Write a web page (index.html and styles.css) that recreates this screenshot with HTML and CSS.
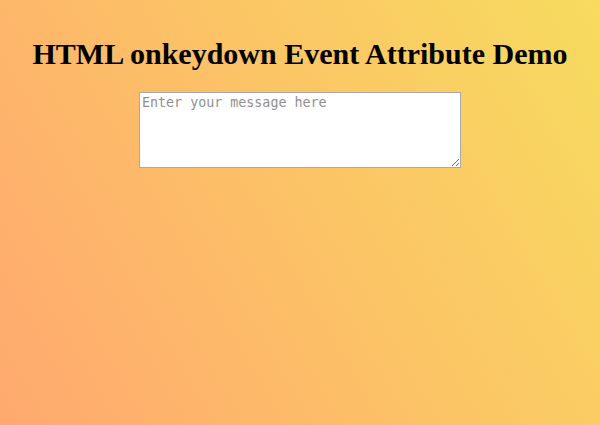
FILE: index.html
```html
<!DOCTYPE html>
<html>
<head>
<meta charset="utf-8">
<link rel="stylesheet" href="styles.css">
</head>
<body>
<main class="page">
  <h1 class="title">HTML onkeydown Event Attribute Demo</h1>
  <textarea class="message" placeholder="Enter your message here"></textarea>
</main>
</body>
</html>
```

FILE: styles.css
```css
html, body {
  margin: 0;
  height: 100%;
}
body {
  background: linear-gradient(60deg, #ffa86f 0%, #fcc266 50%, #f7db5f 100%);
  font-family: "Liberation Serif", "Times New Roman", serif;
}
.page {
  display: flex;
  flex-direction: column;
  align-items: center;
  padding-top: 37px;
}
.title {
  margin: 0;
  font-size: 30px;
  line-height: 34px;
  font-weight: bold;
  color: #000;
}
.message {
  margin-top: 21px;
  width: 322px;
  height: 76px;
  box-sizing: border-box;
  padding: 2px;
  border: 1px solid #a9a9a9;
  background: #fff;
  font-family: "DejaVu Sans Mono", monospace;
  font-size: 13.33px;
}
.message::placeholder {
  color: #8f8f8f;
}
```
